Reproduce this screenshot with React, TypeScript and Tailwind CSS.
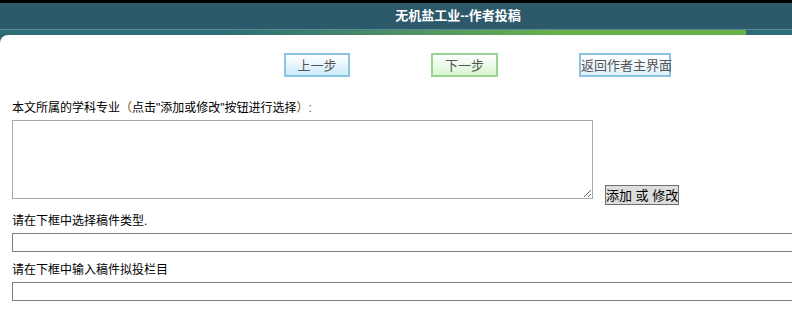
import React from "react";

const cjk = { fontFamily: '"Liberation Sans", "Noto Sans CJK SC", sans-serif' };

export default function App() {
  return (
    <div className="w-[792px] h-[311px] overflow-hidden bg-[#2e6270]" style={cjk}>
      <div className="h-[3px] bg-black" />
      <div className="flex h-[26px] items-center justify-center bg-[#2c5a6b] pl-[124px] text-[13px] font-bold text-white">
        无机盐工业--作者投稿
      </div>
      <div className="h-px bg-[#5a8a96]" />
      <div className="flex h-[5px]">
        <div className="w-[746px] bg-gradient-to-r from-[#2e6c75] from-30% to-[#6ab04a] to-75%" />
        <div className="flex-1 bg-[#2e6c75]" />
      </div>
      <div className="h-[276px] rounded-tl-[8px] bg-white text-[12px] text-black">
        <div className="flex h-[45px] items-end pb-[3px]">
          <button className="ml-[284px] h-[24px] w-[66px] whitespace-nowrap border-2 border-[#8cc4e4] bg-gradient-to-b from-white to-[#cdebfa] px-0 text-[13px] leading-none text-[#555]">
            上一步
          </button>
          <button className="ml-[81px] h-[24px] w-[67px] whitespace-nowrap border-2 border-[#9ad494] bg-gradient-to-b from-white to-[#d8f5d0] px-0 text-[13px] leading-none text-[#555]">
            下一步
          </button>
          <button className="ml-[81px] h-[24px] w-[92px] whitespace-nowrap border-2 border-[#8cc4e4] bg-gradient-to-b from-white to-[#dff1fb] px-0 text-[13px] leading-none text-[#555]">
            返回作者主界面
          </button>
        </div>
        <div className="whitespace-nowrap pl-[12px] pt-[21px] leading-[14px]">
          本文所属的学科专业
          <span className="text-[#7a5200]">（</span>点击"添加或修改"按钮进行选择
          <span className="text-[#7a5200]">）:</span>
        </div>
        <div className="mt-[5px] flex items-end pl-[12px]">
          <textarea className="h-[79px] w-[581px] resize border border-[#a8a8a8]" />
          <button className="mb-[-6px] ml-[12px] h-[20px] w-[74px] whitespace-nowrap border border-[#707070] bg-[#dddddd] px-0 text-[13px] leading-none text-black">
            添加 或 修改
          </button>
        </div>
        <div className="pl-[12px] pt-[15px] leading-[14px]">请在下框中选择稿件类型.</div>
        <div className="pl-[12px] pt-[5px]">
          <input className="block h-[19px] w-[790px] border border-[#808080]" />
        </div>
        <div className="pl-[12px] pt-[11px] leading-[14px]">请在下框中输入稿件拟投栏目</div>
        <div className="pl-[12px] pt-[5px]">
          <input className="block h-[19px] w-[790px] border border-[#808080]" />
        </div>
      </div>
    </div>
  );
}
